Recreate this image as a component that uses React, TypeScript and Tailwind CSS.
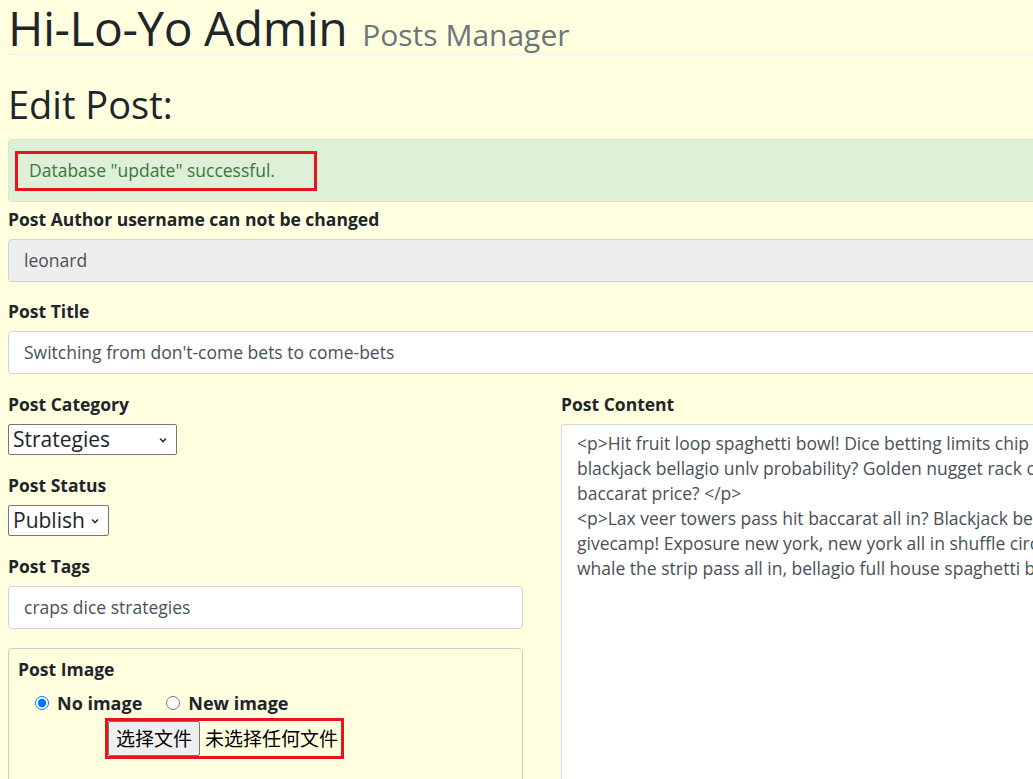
import React from "react";

const CONTENT_LINES = [
  "<p>Hit fruit loop spaghetti bowl! Dice betting limits chip stack craps table",
  "blackjack bellagio unlv probability? Golden nugget rack card counting",
  "baccarat price? </p>",
  "<p>Lax veer towers pass hit baccarat all in? Blackjack bellagio dealer",
  "givecamp! Exposure new york, new york all in shuffle circus circus",
  "whale the strip pass all in, bellagio full house spaghetti bowl",
];

const CJK = { fontFamily: '"Noto Sans CJK SC", sans-serif' };

function Label({ children }: { children: React.ReactNode }) {
  return (
    <div className="text-[17.5px] font-bold leading-[25px] text-[#212529] mb-[7px]">
      {children}
    </div>
  );
}

function TextBox({ value, disabled = false }: { value: string; disabled?: boolean }) {
  return (
    <div
      className={`h-[43px] flex items-center px-[15px] border border-[#ced4da] rounded-[4px] text-[17.5px] text-[#495057] ${
        disabled ? "bg-[#eeeeee]" : "bg-white"
      }`}
    >
      {value}
    </div>
  );
}

function Select({ value, width }: { value: string; width: string }) {
  return (
    <div
      className={`${width} h-[31px] flex items-center justify-between pl-[4px] pr-[8px] bg-white border border-[#767676] rounded-[2px] text-[21px] text-[#212529]`}
    >
      <span>{value}</span>
      <svg width="10" height="10" viewBox="0 0 10 10">
        <path d="M2 3.5 L5 6.5 L8 3.5" fill="none" stroke="#333" strokeWidth="1.6" />
      </svg>
    </div>
  );
}

export default function App() {
  return (
    <div
      className="min-h-screen w-screen overflow-hidden bg-[#ffffe0]"
      style={{ fontFamily: '"Open Sans", "Noto Sans", sans-serif' }}
    >
      <div className="w-[1300px] px-[8px]">
        {/* Header */}
        <div className="h-[55px] border-b border-[#eee] flex items-baseline">
          <span className="text-[48px] leading-[55px] text-[#212529] tracking-[-0.5px]">Hi-Lo-Yo Admin</span>
          <span className="ml-[15px] text-[30px] text-[#6c757d]">Posts Manager</span>
        </div>

        <h2 className="mt-[26px] text-[38px] leading-[46px] text-[#212529]">Edit Post:</h2>

        {/* Alert */}
        <div className="mt-[12px] h-[63px] bg-[#dff0d8] rounded-[4px] border border-[#d6e9c6] flex items-center pl-[6px]">
          <div className="w-[302px] h-[40px] border-[3px] border-[#e8141c] flex items-center pl-[11px] text-[17.5px] text-[#3c763d]">
            Database "update" successful.
          </div>
        </div>

        {/* Author */}
        <div className="mt-[5px]">
          <Label>Post Author username can not be changed</Label>
          <TextBox value="leonard" disabled />
        </div>

        {/* Title */}
        <div className="mt-[17px]">
          <Label>Post Title</Label>
          <TextBox value="Switching from don't-come bets to come-bets" />
        </div>

        <div className="mt-[18px] flex gap-[38px]">
          {/* Left column */}
          <div className="w-[515px] shrink-0">
            <Label>Post Category</Label>
            <Select value="Strategies" width="w-[169px]" />

            <div className="mt-[18px]">
              <Label>Post Status</Label>
              <Select value="Publish" width="w-[101px]" />
            </div>

            <div className="mt-[18px]">
              <Label>Post Tags</Label>
              <TextBox value="craps dice strategies" />
            </div>

            <div className="mt-[19px] h-[200px] border border-[#ccc] rounded-[4px] px-[9px] pt-[8px]">
              <div className="text-[17.5px] font-bold leading-[25px] text-[#212529]">Post Image</div>
              <div className="mt-[9px] h-[24px] pl-[17px] flex items-center gap-[24px] text-[18px] font-bold text-[#212529]">
                <label className="flex items-center gap-[8px]">
                  <input type="radio" name="img" defaultChecked className="w-[14px] h-[14px] m-0 accent-[#0075ff]" />
                  No image
                </label>
                <label className="flex items-center gap-[8px]">
                  <input type="radio" name="img" className="w-[14px] h-[14px] m-0" />
                  New image
                </label>
              </div>
              <div className="mt-[3px] ml-[87px] w-[239px] h-[41px] border-[3px] border-[#e8141c] flex items-center">
                <span
                  className="h-[35px] px-[7px] flex items-center bg-[#efefef] border border-[#767676] rounded-[2px] text-[19px] text-[#000]"
                  style={CJK}
                >
                  选择文件
                </span>
                <span className="ml-[5px] text-[19px] text-[#000] whitespace-nowrap" style={CJK}>
                  未选择任何文件
                </span>
              </div>
            </div>
          </div>

          {/* Right column */}
          <div className="flex-1">
            <Label>Post Content</Label>
            <div className="h-[400px] bg-white border border-[#ced4da] rounded-[4px] px-[15px] pt-[6px] text-[17.5px] leading-[25px] text-[#495057] whitespace-pre overflow-hidden">
              {CONTENT_LINES.map((line) => (
                <div key={line}>{line}</div>
              ))}
            </div>
          </div>
        </div>
      </div>
    </div>
  );
}
